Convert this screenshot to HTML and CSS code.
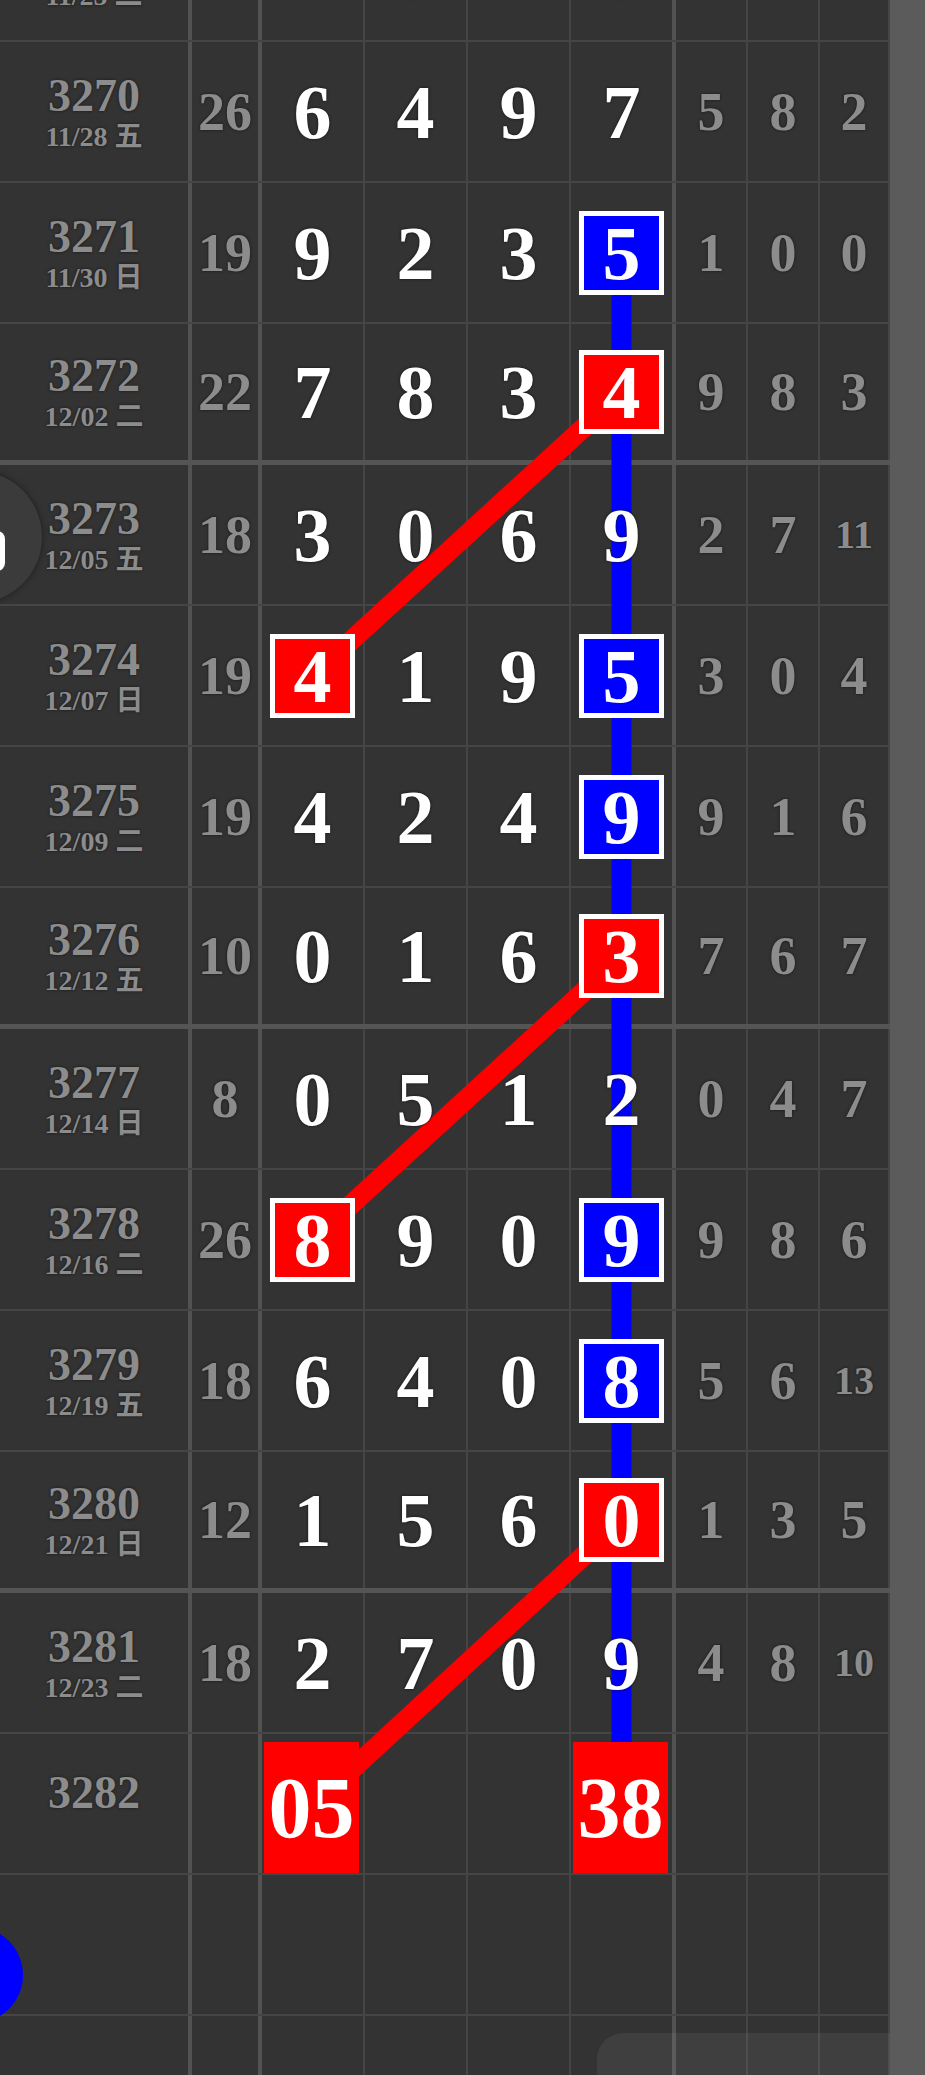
FILE: index.html
```html
<!DOCTYPE html>
<html lang="zh-Hant">
<head>
    <meta charset="UTF-8">
    <meta name="viewport" content="width=device-width, initial-scale=1.0">
    <title>走勢圖</title>
    <link rel="stylesheet" href="styles.css">
</head>
<body>
    <div class="page">
        <div class="board">
            <div class="table">
                <div class="row">
                    <div class="cell c-issue"><span class="issue">3269</span><span class="date">11/25 二</span></div>
                    <div class="cell c-sum"><span class="sum">15</span></div>
                    <div class="cell"><span class="num">2</span></div>
                    <div class="cell"><span class="num">5</span></div>
                    <div class="cell"><span class="num">0</span></div>
                    <div class="cell c-last"><span class="num">8</span></div>
                    <div class="cell"><span class="miss">4</span></div>
                    <div class="cell"><span class="miss">7</span></div>
                    <div class="cell"><span class="miss">1</span></div>
                </div>
                <div class="row">
                    <div class="cell c-issue"><span class="issue">3270</span><span class="date">11/28 五</span></div>
                    <div class="cell c-sum"><span class="sum">26</span></div>
                    <div class="cell"><span class="num">6</span></div>
                    <div class="cell"><span class="num">4</span></div>
                    <div class="cell"><span class="num">9</span></div>
                    <div class="cell c-last"><span class="num">7</span></div>
                    <div class="cell"><span class="miss">5</span></div>
                    <div class="cell"><span class="miss">8</span></div>
                    <div class="cell"><span class="miss">2</span></div>
                </div>
                <div class="row">
                    <div class="cell c-issue"><span class="issue">3271</span><span class="date">11/30 日</span></div>
                    <div class="cell c-sum"><span class="sum">19</span></div>
                    <div class="cell"><span class="num">9</span></div>
                    <div class="cell"><span class="num">2</span></div>
                    <div class="cell"><span class="num">3</span></div>
                    <div class="cell c-last"><span class="num hit blue">5</span></div>
                    <div class="cell"><span class="miss">1</span></div>
                    <div class="cell"><span class="miss">0</span></div>
                    <div class="cell"><span class="miss">0</span></div>
                </div>
                <div class="row sep">
                    <div class="cell c-issue"><span class="issue">3272</span><span class="date">12/02 二</span></div>
                    <div class="cell c-sum"><span class="sum">22</span></div>
                    <div class="cell"><span class="num">7</span></div>
                    <div class="cell"><span class="num">8</span></div>
                    <div class="cell"><span class="num">3</span></div>
                    <div class="cell c-last"><span class="num hit red">4</span></div>
                    <div class="cell"><span class="miss">9</span></div>
                    <div class="cell"><span class="miss">8</span></div>
                    <div class="cell"><span class="miss">3</span></div>
                </div>
                <div class="row">
                    <div class="cell c-issue"><span class="issue">3273</span><span class="date">12/05 五</span></div>
                    <div class="cell c-sum"><span class="sum">18</span></div>
                    <div class="cell"><span class="num">3</span></div>
                    <div class="cell"><span class="num">0</span></div>
                    <div class="cell"><span class="num">6</span></div>
                    <div class="cell c-last"><span class="num">9</span></div>
                    <div class="cell"><span class="miss">2</span></div>
                    <div class="cell"><span class="miss">7</span></div>
                    <div class="cell"><span class="miss two">11</span></div>
                </div>
                <div class="row">
                    <div class="cell c-issue"><span class="issue">3274</span><span class="date">12/07 日</span></div>
                    <div class="cell c-sum"><span class="sum">19</span></div>
                    <div class="cell"><span class="num hit red">4</span></div>
                    <div class="cell"><span class="num">1</span></div>
                    <div class="cell"><span class="num">9</span></div>
                    <div class="cell c-last"><span class="num hit blue">5</span></div>
                    <div class="cell"><span class="miss">3</span></div>
                    <div class="cell"><span class="miss">0</span></div>
                    <div class="cell"><span class="miss">4</span></div>
                </div>
                <div class="row">
                    <div class="cell c-issue"><span class="issue">3275</span><span class="date">12/09 二</span></div>
                    <div class="cell c-sum"><span class="sum">19</span></div>
                    <div class="cell"><span class="num">4</span></div>
                    <div class="cell"><span class="num">2</span></div>
                    <div class="cell"><span class="num">4</span></div>
                    <div class="cell c-last"><span class="num hit blue">9</span></div>
                    <div class="cell"><span class="miss">9</span></div>
                    <div class="cell"><span class="miss">1</span></div>
                    <div class="cell"><span class="miss">6</span></div>
                </div>
                <div class="row sep">
                    <div class="cell c-issue"><span class="issue">3276</span><span class="date">12/12 五</span></div>
                    <div class="cell c-sum"><span class="sum">10</span></div>
                    <div class="cell"><span class="num">0</span></div>
                    <div class="cell"><span class="num">1</span></div>
                    <div class="cell"><span class="num">6</span></div>
                    <div class="cell c-last"><span class="num hit red">3</span></div>
                    <div class="cell"><span class="miss">7</span></div>
                    <div class="cell"><span class="miss">6</span></div>
                    <div class="cell"><span class="miss">7</span></div>
                </div>
                <div class="row">
                    <div class="cell c-issue"><span class="issue">3277</span><span class="date">12/14 日</span></div>
                    <div class="cell c-sum"><span class="sum">8</span></div>
                    <div class="cell"><span class="num">0</span></div>
                    <div class="cell"><span class="num">5</span></div>
                    <div class="cell"><span class="num">1</span></div>
                    <div class="cell c-last"><span class="num">2</span></div>
                    <div class="cell"><span class="miss">0</span></div>
                    <div class="cell"><span class="miss">4</span></div>
                    <div class="cell"><span class="miss">7</span></div>
                </div>
                <div class="row">
                    <div class="cell c-issue"><span class="issue">3278</span><span class="date">12/16 二</span></div>
                    <div class="cell c-sum"><span class="sum">26</span></div>
                    <div class="cell"><span class="num hit red">8</span></div>
                    <div class="cell"><span class="num">9</span></div>
                    <div class="cell"><span class="num">0</span></div>
                    <div class="cell c-last"><span class="num hit blue">9</span></div>
                    <div class="cell"><span class="miss">9</span></div>
                    <div class="cell"><span class="miss">8</span></div>
                    <div class="cell"><span class="miss">6</span></div>
                </div>
                <div class="row">
                    <div class="cell c-issue"><span class="issue">3279</span><span class="date">12/19 五</span></div>
                    <div class="cell c-sum"><span class="sum">18</span></div>
                    <div class="cell"><span class="num">6</span></div>
                    <div class="cell"><span class="num">4</span></div>
                    <div class="cell"><span class="num">0</span></div>
                    <div class="cell c-last"><span class="num hit blue">8</span></div>
                    <div class="cell"><span class="miss">5</span></div>
                    <div class="cell"><span class="miss">6</span></div>
                    <div class="cell"><span class="miss two">13</span></div>
                </div>
                <div class="row sep">
                    <div class="cell c-issue"><span class="issue">3280</span><span class="date">12/21 日</span></div>
                    <div class="cell c-sum"><span class="sum">12</span></div>
                    <div class="cell"><span class="num">1</span></div>
                    <div class="cell"><span class="num">5</span></div>
                    <div class="cell"><span class="num">6</span></div>
                    <div class="cell c-last"><span class="num hit red">0</span></div>
                    <div class="cell"><span class="miss">1</span></div>
                    <div class="cell"><span class="miss">3</span></div>
                    <div class="cell"><span class="miss">5</span></div>
                </div>
                <div class="row">
                    <div class="cell c-issue"><span class="issue">3281</span><span class="date">12/23 二</span></div>
                    <div class="cell c-sum"><span class="sum">18</span></div>
                    <div class="cell"><span class="num">2</span></div>
                    <div class="cell"><span class="num">7</span></div>
                    <div class="cell"><span class="num">0</span></div>
                    <div class="cell c-last"><span class="num">9</span></div>
                    <div class="cell"><span class="miss">4</span></div>
                    <div class="cell"><span class="miss">8</span></div>
                    <div class="cell"><span class="miss two">10</span></div>
                </div>
                <div class="row">
                    <div class="cell c-issue"><span class="issue">3282</span><span class="date blank"></span></div>
                    <div class="cell c-sum"></div>
                    <div class="cell c-big"><span class="num big">05</span></div>
                    <div class="cell"></div>
                    <div class="cell"></div>
                    <div class="cell c-last c-big"><span class="num big">38</span></div>
                    <div class="cell"></div>
                    <div class="cell"></div>
                    <div class="cell"></div>
                </div>
                <div class="row">
                    <div class="cell c-issue"></div>
                    <div class="cell c-sum"></div>
                    <div class="cell"></div>
                    <div class="cell"></div>
                    <div class="cell"></div>
                    <div class="cell c-last"></div>
                    <div class="cell"></div>
                    <div class="cell"></div>
                    <div class="cell"></div>
                </div>
                <div class="row">
                    <div class="cell c-issue"></div>
                    <div class="cell c-sum"></div>
                    <div class="cell"></div>
                    <div class="cell"></div>
                    <div class="cell"></div>
                    <div class="cell c-last"></div>
                    <div class="cell"></div>
                    <div class="cell"></div>
                    <div class="cell"></div>
                </div>
            </div>

            <!-- trend lines, drawn under the digits -->
            <svg class="trend" width="890" height="2075" viewBox="0 0 890 2075">
                <line x1="621.5" y1="253" x2="621.5" y2="1806" stroke="#0000ff" stroke-width="20"/>
                <line x1="621.5" y1="393" x2="312.5" y2="676" stroke="#ff0000" stroke-width="20"/>
                <line x1="621.5" y1="957" x2="312.5" y2="1240" stroke="#ff0000" stroke-width="20"/>
                <line x1="621.5" y1="1521" x2="310" y2="1808" stroke="#ff0000" stroke-width="20"/>
            </svg>
        </div>
        <div class="scrollbar"></div>

        <div class="fab fab-menu"><span class="fab-icon"></span></div>
        <div class="fab fab-blue"></div>
        <div class="dock"></div>
    </div>
</body>
</html>
```

FILE: styles.css
```css
body {
    margin: 0;
    padding: 0;
    background-color: #333333;
    font-family: "Liberation Serif", "Noto Sans CJK TC", serif;
    overflow: hidden;
}

.page {
    position: relative;
    display: flex;
    width: 925px;
    height: 2075px;
    overflow: hidden;
}

.board {
    position: relative;
    width: 890px;
    flex: none;
}

.table {
    margin-top: -99px;
}

.row {
    display: grid;
    grid-template-columns: 192px 70px 103px 103px 103px 105px 72px 72px 70px;
    height: 141px;
    box-sizing: border-box;
    border-bottom: 2px solid #454545;
}

.row.sep {
    border-bottom: 5px solid #555555;
}

.cell {
    display: flex;
    align-items: center;
    justify-content: center;
    box-sizing: border-box;
    border-right: 2px solid #454545;
}

.c-issue,
.c-sum,
.c-last {
    border-right: 4px solid #525252;
}

.c-issue {
    flex-direction: column;
}

.issue {
    color: #8c8c8c;
    font-weight: bold;
    font-size: 46px;
    line-height: 1;
    text-shadow: 0 0 3px #151515;
}

.date {
    color: #8c8c8c;
    font-weight: bold;
    font-size: 28px;
    line-height: 1;
    margin-top: 4px;
    white-space: pre;
    text-shadow: 0 0 3px #151515;
}

.date.blank {
    height: 18px;
}

.sum,
.miss {
    color: #8c8c8c;
    font-weight: bold;
    font-size: 54px;
    line-height: 1;
    text-shadow: 0 0 3px #151515;
}

.miss.two {
    font-size: 40px;
}

.num {
    position: relative;
    z-index: 2;
    color: #ffffff;
    font-weight: bold;
    font-size: 76px;
    line-height: 1;
    text-shadow: 0 0 3px #111111;
}

.hit {
    display: flex;
    align-items: center;
    justify-content: center;
    width: 85px;
    height: 84px;
    box-sizing: border-box;
    border: 5px solid #ffffff;
    text-shadow: none;
}

.hit.red {
    background-color: #ff0000;
}

.hit.blue {
    background-color: #0000ff;
}

.c-big {
    align-items: stretch;
}

.big {
    display: flex;
    align-items: center;
    justify-content: center;
    flex: 1;
    margin: 8px 4px 0 2px;
    background-color: #ff0000;
    font-size: 86px;
    text-shadow: none;
}

.trend {
    position: absolute;
    left: 0;
    top: 0;
    z-index: 1;
    pointer-events: none;
}

.scrollbar {
    position: relative;
    z-index: 4;
    width: 35px;
    flex: none;
    background-color: #5b5b5b;
}

/* floating buttons half hidden on the left edge */
.fab {
    position: absolute;
    z-index: 3;
    border-radius: 50%;
}

.fab-menu {
    left: -90px;
    top: 471px;
    width: 132px;
    height: 132px;
    background-color: #3b3b3b;
    box-shadow: 0 0 6px rgba(0, 0, 0, 0.45);
}

.fab-icon {
    position: absolute;
    right: 37px;
    top: 60px;
    width: 26px;
    height: 40px;
    border-radius: 8px;
    background-color: #ffffff;
}

.fab-blue {
    left: -73px;
    top: 1927px;
    width: 96px;
    height: 96px;
    background-color: #0000ff;
}

.dock {
    position: absolute;
    z-index: 3;
    left: 597px;
    right: 0;
    top: 2033px;
    height: 80px;
    border-top-left-radius: 26px;
    background-color: rgba(255, 255, 255, 0.06);
}
```
